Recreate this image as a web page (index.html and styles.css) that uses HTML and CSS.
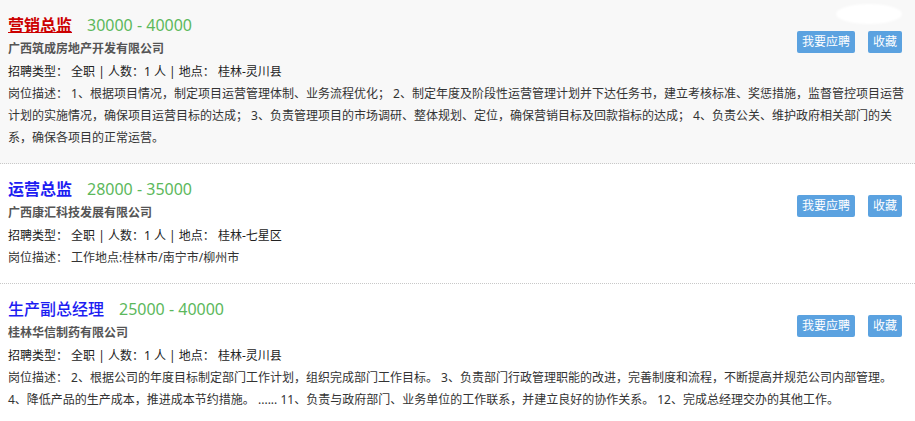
FILE: index.html
```html
<!DOCTYPE html>
<html lang="zh-CN">
<head>
<meta charset="utf-8">
<title>职位列表</title>
<link rel="stylesheet" href="styles.css">
</head>
<body>
<div class="glare"></div>
<ul class="job-list">
  <li class="job job-hover">
    <div class="actions">
      <a class="btn" href="#">我要应聘</a>
      <a class="btn" href="#">收藏</a>
    </div>
    <div class="job-title"><a class="title-link" href="#">营销总监</a><span class="salary">30000 - 40000</span></div>
    <div class="company">广西筑成房地产开发有限公司</div>
    <div class="meta">招聘类型： 全职 | 人数：1 人 | 地点： 桂林-灵川县</div>
    <div class="desc">岗位描述： 1、根据项目情况，制定项目运营管理体制、业务流程优化； 2、制定年度及阶段性运营管理计划并下达任务书，建立考核标准、奖惩措施，监督管控项目运营计划的实施情况，确保项目运营目标的达成； 3、负责管理项目的市场调研、整体规划、定位，确保营销目标及回款指标的达成； 4、负责公关、维护政府相关部门的关系，确保各项目的正常运营。</div>
  </li>
  <li class="job">
    <div class="actions">
      <a class="btn" href="#">我要应聘</a>
      <a class="btn" href="#">收藏</a>
    </div>
    <div class="job-title"><a class="title-link" href="#">运营总监</a><span class="salary">28000 - 35000</span></div>
    <div class="company">广西康汇科技发展有限公司</div>
    <div class="meta">招聘类型： 全职 | 人数：1 人 | 地点： 桂林-七星区</div>
    <div class="desc">岗位描述： 工作地点:桂林市/南宁市/柳州市</div>
  </li>
  <li class="job">
    <div class="actions">
      <a class="btn" href="#">我要应聘</a>
      <a class="btn" href="#">收藏</a>
    </div>
    <div class="job-title"><a class="title-link light" href="#">生产副总经理</a><span class="salary">25000 - 40000</span></div>
    <div class="company">桂林华信制药有限公司</div>
    <div class="meta">招聘类型： 全职 | 人数：1 人 | 地点： 桂林-灵川县</div>
    <div class="desc">岗位描述： 2、根据公司的年度目标制定部门工作计划，组织完成部门工作目标。 3、负责部门行政管理职能的改进，完善制度和流程，不断提高并规范公司内部管理。 4、降低产品的生产成本，推进成本节约措施。 ...... 11、负责与政府部门、业务单位的工作联系，并建立良好的协作关系。 12、完成总经理交办的其他工作。</div>
  </li>
</ul>
</body>
</html>
```
FILE: styles.css
```css
html, body {
  margin: 0;
  padding: 0;
  background: #ffffff;
}

body {
  font-family: "Noto Sans", "Noto Sans CJK SC", sans-serif;
  font-size: 12px;
  color: #333333;
  position: relative;
  text-spacing-trim: space-all;
}

.job-list {
  list-style: none;
  margin: 0;
  padding: 0;
}

.job {
  padding: 13px 10px 14px 8px;
  border-bottom: 1px dotted #c8c8c8;
}

.job-hover {
  background: #f8f8f8;
}

.actions {
  float: right;
  display: flex;
  gap: 13px;
  margin: 18px 3px 0 0;
}

.btn {
  display: block;
  height: 22px;
  line-height: 22px;
  padding: 0 5px;
  background: #5ba2e0;
  color: #ffffff;
  border-radius: 2px;
  text-decoration: none;
  font-size: 12px;
}

.job-title {
  line-height: 24px;
  font-size: 16px;
}

.title-link {
  color: #1d1df2;
  font-weight: bold;
  text-decoration: none;
}

.title-link.light {
  font-weight: 500;
}

.job-hover .title-link {
  color: #cc0000;
  text-decoration: underline;
}

.salary {
  color: #5cb85c;
  margin-left: 15px;
}

.company {
  line-height: 24px;
  font-weight: bold;
  color: #555555;
}

.meta {
  line-height: 22px;
  color: #222222;
}

.desc {
  line-height: 22px;
  color: #333333;
}

.glare {
  position: absolute;
  top: 4px;
  left: 836px;
  width: 66px;
  height: 20px;
  border-radius: 50%;
  background: #ffffff;
  filter: blur(1px);
}
```
